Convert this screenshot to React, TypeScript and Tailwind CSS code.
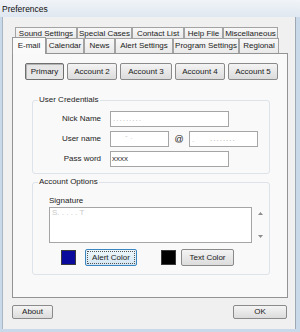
const row1 = [
  ["Sound Settings", 62],
  ["Special Cases", 55],
  ["Contact List", 52],
  ["Help File", 39],
  ["Miscellaneous", 55],
] as const;

const row2 = [
  ["Calendar", 38],
  ["News", 31],
  ["Alert Settings", 58],
  ["Program Settings", 66],
  ["Regional", 40],
] as const;

const accounts = [
  ["Account 2", 50],
  ["Account 3", 52],
  ["Account 4", 50],
  ["Account 5", 50],
] as const;

function Btn({ label, w, h = 17 }: { label: string; w: number; h?: number }) {
  return (
    <div
      style={{ width: w, height: h }}
      className="flex items-center justify-center rounded-[2px] border border-[#8a8a8a] bg-gradient-to-b from-[#f4f4f4] to-[#dcdcdc] text-[#1a1a1a]"
    >
      {label}
    </div>
  );
}

export default function App() {
  return (
    <div className="w-[300px] h-[332px] flex flex-col bg-[#c9d9ea] font-['Liberation_Sans',Arial,sans-serif] text-[8px] leading-[12px] text-[#1c1c1c]">
      {/* title */}
      <div className="h-[17px] flex items-center pl-[2px] bg-gradient-to-b from-[#f1f4f8] to-[#dfe7f0] text-[8.5px] text-[#111]">
        Preferences
      </div>

      <div className="flex-1 flex flex-col ml-[2px] mr-[4px] mb-[3px] bg-[#f0f0f0] border-l border-[#a9b6c4] border-r-[#9ea8b3] border-r">
        {/* tabs row 1 */}
        <div className="flex mt-[10px] ml-[12px] h-[11px]">
          {row1.map(([label, w]) => (
            <div
              key={label}
              style={{ width: w }}
              className="flex items-start justify-center border-t border-l border-r border-[#a3a3a3] bg-gradient-to-b from-[#f8f8f8] to-[#e9e9e9] leading-[11px]"
            >
              {label}
            </div>
          ))}
        </div>

        {/* tabs row 2 */}
        <div className="flex items-end ml-[9px] h-[15px]">
          <div className="relative z-10 w-[34px] h-[17px] -mb-px flex items-start justify-center pt-[2px] border-t border-l border-r border-[#9a9a9a] bg-[#fafafa]">
            E-mail
          </div>
          {row2.map(([label, w]) => (
            <div
              key={label}
              style={{ width: w }}
              className="h-[15px] flex items-center justify-center border-t border-l border-r border-[#a3a3a3] bg-gradient-to-b from-[#f8f8f8] to-[#e9e9e9]"
            >
              {label}
            </div>
          ))}
        </div>

        {/* panel */}
        <div className="ml-[9px] w-[276px] h-[245px] border border-[#939393] bg-[#f9f9f9] pl-[12px] pt-[9px]">
          <div className="flex gap-[3px] h-[17px]">
            <div className="w-[39px] h-[17px] flex items-center justify-center rounded-[2px] border border-[#6f6f6f] bg-[#e6e6e6] shadow-[inset_1px_1px_0_#b5b5b5]">
              Primary
            </div>
            {accounts.map(([label, w]) => (
              <Btn key={label} label={label} w={w} />
            ))}
          </div>

          {/* user credentials */}
          <fieldset className="ml-[7px] mt-[14px] w-[238px] border border-[#dde3e8] rounded-[3px] pt-[5px] pb-[6px]">
            <legend className="ml-[5px] px-[1px] leading-[12px]">User Credentials</legend>
            <div className="flex flex-col gap-[4px]">
              <div className="flex items-center h-[16px]">
                <div className="w-[68px] text-right">Nick Name</div>
                <div className="ml-[9px] w-[119px] h-[16px] border border-[#a5a5a5] bg-white flex items-center pl-[2px] text-[#b8b8b8] tracking-[1px]">
                  .........
                </div>
              </div>
              <div className="flex items-center h-[16px]">
                <div className="w-[68px] text-right">User name</div>
                <div className="ml-[9px] w-[59px] h-[16px] border border-[#a5a5a5] bg-white flex items-center pl-[14px] text-[#cfcfcf]">
                  ˆ ·
                </div>
                <div className="w-[20px] text-center text-[9px]">@</div>
                <div className="w-[69px] h-[16px] border border-[#a5a5a5] bg-white flex items-center pl-[2px] text-[#a8a8a8]">
                  <span className="text-[6px]">ˏ</span>
                  <span className="ml-[16px] tracking-[1px]">........</span>
                </div>
              </div>
              <div className="flex items-center h-[16px]">
                <div className="w-[68px] text-right">Pass word</div>
                <div className="ml-[9px] w-[119px] h-[16px] border border-[#a5a5a5] bg-white flex items-center pl-[1px] text-[#333]">
                  xxxx
                </div>
              </div>
            </div>
          </fieldset>

          {/* account options */}
          <fieldset className="ml-[7px] mt-[2px] w-[238px] border border-[#dde3e8] rounded-[3px] pt-[7px] pb-[8px]">
            <legend className="ml-[5px] px-[1px] leading-[12px]">Account Options</legend>
            <div className="pl-[16px]">
              <div>Signature</div>
              <div className="flex">
                <div className="w-[203px] h-[36px] border border-[#a5a5a5] bg-white pl-[2px] text-[#c9c9c9] leading-[10px]">
                  S. . . .  . T
                </div>
                <div className="w-[14px] h-[36px] flex flex-col items-center justify-between py-[5px] pl-[2px]">
                  <svg width="5" height="3" viewBox="0 0 5 3">
                    <path d="M0 3 L2.5 0 L5 3 Z" fill="#8c8c8c" />
                  </svg>
                  <svg width="5" height="3" viewBox="0 0 5 3">
                    <path d="M0 0 L2.5 3 L5 0 Z" fill="#8c8c8c" />
                  </svg>
                </div>
              </div>
              <div className="flex items-center mt-[6px] h-[17px]">
                <div className="ml-[12px] w-[15px] h-[15px] bg-[#0a0a9c] border border-[#3a3a3a]" />
                <div className="ml-[9px] w-[52px] h-[17px] rounded-[2px] border border-[#3a86c0] bg-gradient-to-b from-[#eef6fb] to-[#d4e6f2] p-[1px]">
                  <div className="w-full h-full flex items-center justify-center border border-dotted border-[#555]">
                    Alert Color
                  </div>
                </div>
                <div className="ml-[24px] w-[15px] h-[15px] bg-black border border-[#3a3a3a]" />
                <div className="ml-[5px]">
                  <Btn label="Text Color" w={53} />
                </div>
              </div>
            </div>
          </fieldset>
        </div>

        {/* bottom buttons */}
        <div className="flex justify-between mt-[7px] ml-[9px] mr-[8px]">
          <Btn label="About" w={41} h={14} />
          <Btn label="OK" w={54} h={14} />
        </div>
      </div>
    </div>
  );
}
